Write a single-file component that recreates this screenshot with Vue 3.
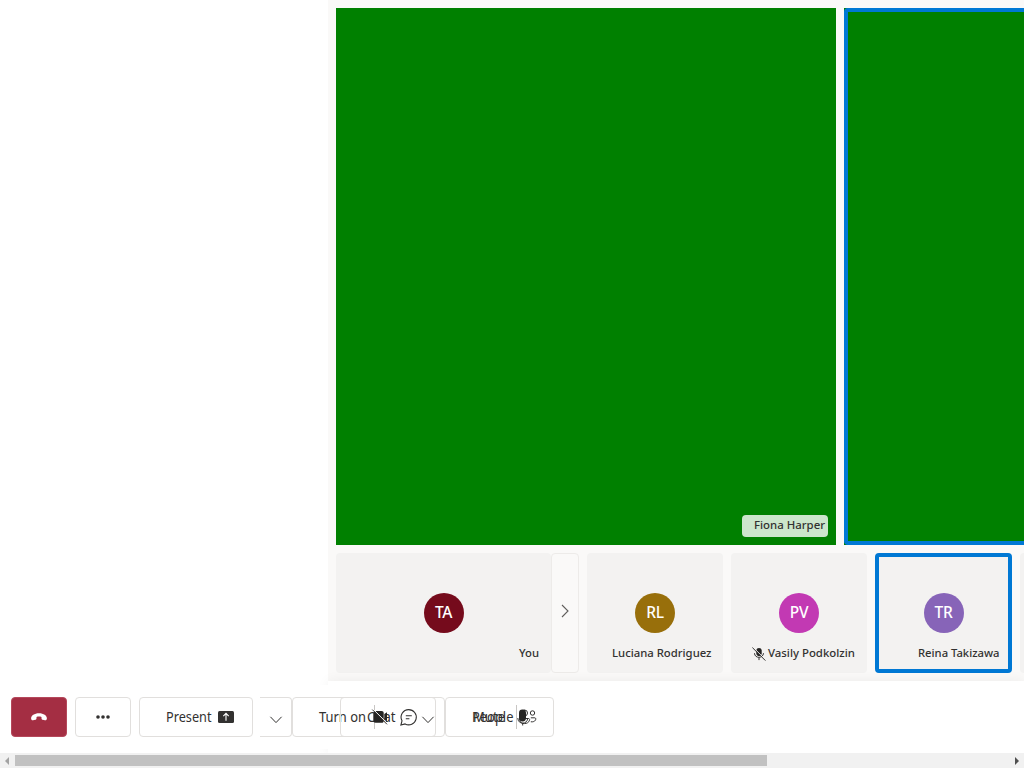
<script setup>
const people = [
  { initials: 'RL', name: 'Luciana Rodriguez', tone: 'gold', w: 99.5 },
  { initials: 'PV', name: 'Vasily Podkolzin', tone: 'magenta', muted: true, w: 87 },
  { initials: 'TR', name: 'Reina Takizawa', tone: 'purple', speaking: true, w: 81.5 },
]
</script>

<template>
  <div class="page">
    <main class="stage">
      <section class="videos">
        <div class="video first">
          <div class="label"><svg width="71" height="20"><text x="0" y="14" textLength="71" lengthAdjust="spacingAndGlyphs">Fiona Harper</text></svg></div>
        </div>
        <div class="video second"><div class="ring"></div></div>
      </section>
      <section class="strip">
        <div class="tile self">
          <div class="avatar maroon">TA</div>
          <div class="name"><svg width="20" height="20"><text x="0" y="14" textLength="20" lengthAdjust="spacingAndGlyphs">You</text></svg></div>
        </div>
        <button class="pager">
          <svg width="10" height="14" viewBox="0 0 10 14"><path d="M2 1l6 6-6 6" /></svg>
        </button>
        <div v-for="p in people" :key="p.initials" class="tile" :class="{ speaking: p.speaking }">
          <div class="avatar" :class="p.tone">{{ p.initials }}</div>
          <div class="name">
            <svg v-if="p.muted" class="mic-off" width="14" height="14" viewBox="0 0 14 14">
              <path class="solid" d="M4.300 3.500C4.500.2 9.500.2 9.700 3.500v3c0 3-4.800 3.800-5.400 0z" />
              <path d="M2.500 6.200c.1 5.500 8.700 5.500 9 0M7 10.400v2.700" />
              <path class="gap" d="M1.100.3l13 13" /><path d="M.4.6l13 13" />
            </svg>
            <svg :width="p.w" height="20"><text x="0" y="14" :textLength="p.w" lengthAdjust="spacingAndGlyphs">{{ p.name }}</text></svg>
          </div>
        </div>
        <div class="tile"></div>
      </section>
    </main>

    <footer class="controls">
      <button class="btn end">
        <svg width="16" height="8" viewBox="0 0 16 8"><path d="M.1 5.5C-.1 2.600 3.500.2 8 .2s8.100 2.400 7.900 5.300c-.1 1.300-.8 2-1.900 1.800l-2.300-.5c-.8-.2-1.200-.7-1.200-1.600V4c-1.600-.6-3.400-.6-5 0v1.200c0 .9-.4 1.400-1.200 1.600L2 7.300C.9 7.500.2 6.800.1 5.500z" /></svg>
      </button>
      <button class="btn more">
        <svg width="14" height="4" viewBox="0 0 14 4"><circle cx="2" cy="2" r="1.800" /><circle cx="7" cy="2" r="1.800" /><circle cx="12" cy="2" r="1.800" /></svg>
      </button>
      <button class="btn present">
        <svg class="word" width="46" height="20"><text x="0" y="15" textLength="45.500" lengthAdjust="spacingAndGlyphs">Present</text></svg>
        <svg class="share" width="16" height="12" viewBox="0 0 16 12"><rect width="16" height="12" rx="1.500" /><path d="M8 9.800V2.400M5.300 5.100L8 2.400l2.700 2.700" /></svg>
      </button>
      <button class="btn arrow"><svg width="12" height="8" viewBox="0 0 12 8"><path d="M.4 .8L6 6.600 11.600 .8" /></svg></button>
      <button class="btn camera">
        <svg class="word" width="48" height="20"><text x="0" y="15" textLength="47" lengthAdjust="spacingAndGlyphs">Turn on</text></svg>
      </button>
      <button class="btn people">
        <svg class="word" width="44" height="20"><text x="0" y="15" textLength="41.500" lengthAdjust="spacingAndGlyphs">People</text></svg>
        <svg class="group" width="18" height="16" viewBox="0 0 18 16">
          <circle cx="5.500" cy="4" r="3" /><circle cx="13.500" cy="4" r="2.200" />
          <path d="M1 9.500h8.500c1 0 1.300.8 1 1.700C9.400 15.700 1.500 15.700.7 11.200.5 10.300.4 9.500 1 9.500zM11.800 8.800h4c1.800 0 1.400 4.600-4 4" />
        </svg>
      </button>
      <div class="overlay chat">
        <svg class="word" width="30" height="20"><text x="0" y="15" textLength="28.500" lengthAdjust="spacingAndGlyphs">Chat</text></svg>
        <svg class="bubble" width="17" height="17" viewBox="0 0 17 17"><path d="M8.700.6a7.600 7.600 0 1 1-3.600 14.300L.9 16l1.100-4.200A7.600 7.600 0 0 1 8.700.6zM5.800 6.700h6M5.800 9.800h3.600" /></svg>
        <svg class="chev" width="12" height="8" viewBox="0 0 12 8"><path d="M.4 .8L6 6.600 11.600 .8" /></svg>
      </div>
      <i class="divider one"></i><i class="divider two"></i>
      <svg class="overlay cam" width="18" height="16" viewBox="0 0 18 16"><path class="solid" d="M4 2h6.500c1.500 0 2.200.8 2.200 2v7.800c0 1.500-.8 2.200-2.200 2H4.500c-1.400 0-2.200-.8-2.200-2V4zM13.300 5l2.700-1.700v9l-2.700-1.700z" /><path class="cut" d="M2.200.3l14.500 14.500" /><path d="M1.300.6l14.700 14.700" /></svg>
      <svg class="overlay mute" width="34" height="20"><text x="0" y="15" textLength="32" lengthAdjust="spacingAndGlyphs">Mute</text></svg>
      <svg class="overlay mic" width="12" height="18" viewBox="0 0 12 18"><rect class="solid" x="2" y=".5" width="7" height="12" rx="3.400" /><path d="M.8 9c0 6.900 9.900 6.900 9.900 0M5.700 14v2.500" /></svg>
    </footer>

    <div class="scrollbar">
      <svg width="15" height="15" viewBox="0 0 15 15"><path fill="#a3a3a3" d="M9 4v8L5 8z" /></svg>
      <div class="thumb"></div>
      <svg class="right" width="15" height="15" viewBox="0 0 15 15"><path fill="#505050" d="M6 4v8l4-4z" /></svg>
    </div>
  </div>
</template>

<style>
body { overflow: hidden; background: #fff; }
</style>

<style scoped>
.page { position: relative; width: 1024px; height: 768px; overflow: hidden; background: #fff; font: 14px "Noto Sans", "Open Sans", sans-serif; color: #323130; }
.page *, .page { box-sizing: border-box; }
svg { display: block; flex: none; overflow: visible; }
text { fill: #323130; }
.stage { margin-left: 328px; height: 681px; background: #faf9f8; padding: 8px 0 0 8px; overflow: hidden; }
.videos { display: flex; gap: 8px; height: 537px; }
.video { background: #008000; flex: none; }
.first { width: 500px; display: flex; align-items: flex-end; justify-content: flex-end; padding: 8px; }
.second { width: 500px; }
.ring { height: 100%; border: 4px solid #0078d4; border-radius: 4px; }
.label { width: 86px; height: 22px; border-radius: 4px; background: rgba(255,255,255,.8); display: flex; justify-content: flex-end; padding-right: 3.500px; }
.label text, .name text { font-size: 11.500px; font-weight: 500; }
.strip { display: flex; height: 120px; margin-top: 8px; }
.tile { position: relative; flex: none; width: 136px; background: #f3f2f1; border-radius: 4px; margin-right: 8px; display: flex; flex-direction: column; align-items: center; padding-top: 40px; }
.self { width: 215px; margin-right: 0; }
.speaking { width: 137px; }
.speaking::after { content: ""; position: absolute; inset: 0; border: 4px solid #0078d4; border-radius: 4px; }
.avatar { width: 40px; height: 40px; line-height: 39px; border-radius: 50%; text-align: center; font-size: 15.500px; font-weight: 500; letter-spacing: -.3px; color: #fff; }
.maroon { background: #750b1c; }
.gold { background: #986f0b; }
.magenta { background: #c239b3; }
.purple { background: #8764b8; }
.name { align-self: stretch; display: flex; justify-content: flex-end; padding-right: 12px; margin-top: 10px; }
.speaking .name { padding-right: 13px; }
.mic-off { margin: 4px 2.500px 0 0; stroke: #323130; fill: none; stroke-width: 1; }
.solid { fill: #252423; stroke: none; }
.mic-off .gap { stroke: #f3f2f1; }
.pager { flex: none; width: 28px; margin-right: 8px; border: 1px solid #edebe9; border-radius: 4px; background: #faf9f8; display: flex; align-items: center; justify-content: center; padding: 0 0 4px; }
.pager path { fill: none; stroke: #605e5c; stroke-width: 1.1; }
.controls { position: relative; height: 72px; display: flex; align-items: flex-start; padding: 16px 0 0 10.500px; }
.controls::before { content: ""; position: absolute; inset: 0 0 0 328px; box-shadow: 0 0 12px rgba(0,0,0,.06); background: #fff; }
.controls::after { content: ""; position: absolute; z-index: 0; left: 0; top: 4px; width: 328px; height: 64px; background: #fff; }
.btn { position: relative; z-index: 1; flex: none; height: 40px; border: 1px solid #e1dfdd; border-radius: 4px; background: #fff; display: flex; align-items: center; padding: 0; font: inherit; }
.word text, .mute text { font-size: 13.500px; }
.end { width: 56.500px; background: #a42e43; border-color: #b5485b; justify-content: center; }
.end path { fill: #fff; }
.more { width: 56px; margin-left: 8px; justify-content: center; }
.more circle { fill: #323130; }
.present { width: 114px; margin-left: 8px; padding-left: 26px; }
.share { margin-left: 5.500px; }
.share rect { fill: #323130; }
.share path { fill: none; stroke: #fff; stroke-width: 1.1; }
.arrow { width: 32px; margin-left: 7px; border-left: 0; border-radius: 0 4px 4px 0; padding: 5px 0 0 9.500px; }
.arrow path, .chev path { fill: none; stroke: #323130; }
.camera { width: 152.500px; padding-left: 26px; }
.people { width: 109.500px; padding-left: 26px; }
.group { margin-left: 3px; }
.group * { fill: none; stroke: #323130; }
.overlay { position: absolute; z-index: 2; }
.chat { left: 340px; top: 16px; width: 96px; height: 40px; border: 1px solid #e1dfdd; border-radius: 4px; display: flex; align-items: center; padding-left: 26px; }
.bubble { margin-left: 3px; }
.bubble path { fill: none; stroke: #323130; stroke-width: 1.1; }
.chev { margin: 5px 0 0 5px; }
.divider { position: absolute; z-index: 2; top: 24px; width: 1px; height: 24px; background: #c8c6c4; }
.one { left: 374px; }
.two { left: 516px; }
.cam { left: 371px; top: 28px; stroke: #323130; }
.cam .cut { stroke: #fff; }
.mute { left: 473px; top: 26px; }
.mic { left: 516.500px; top: 27.500px; fill: none; stroke: #323130; }
.scrollbar { position: relative; z-index: 3; height: 15px; display: flex; align-items: center; background: #f1f1f1; }
.thumb { width: 752px; height: 11px; background: #c1c1c1; }
.right { margin-left: auto; }
</style>
